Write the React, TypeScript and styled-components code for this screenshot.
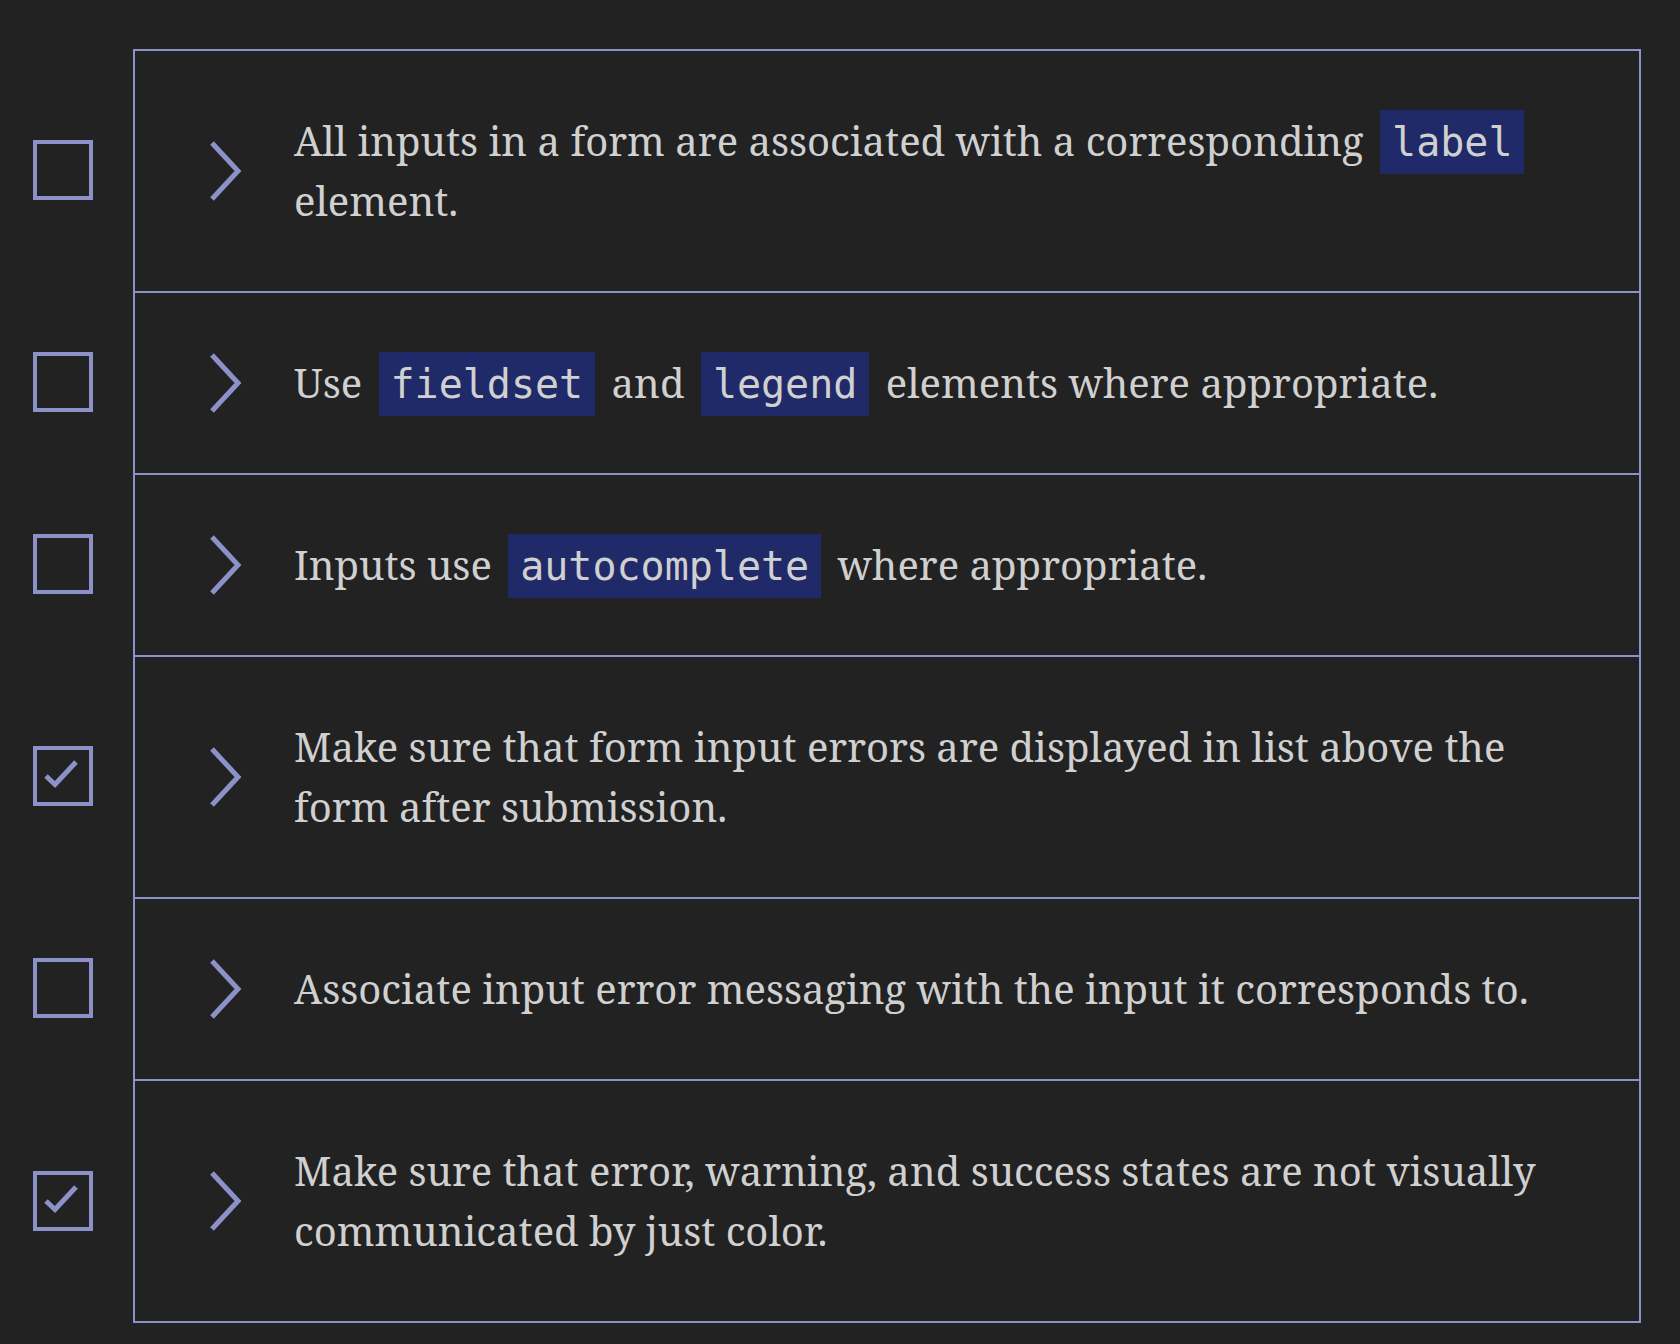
import React from "react";
import styled, { createGlobalStyle } from "styled-components";

const GlobalStyle = createGlobalStyle`
  html, body {
    margin: 0;
    padding: 0;
    background: #222222;
  }
  body {
    font-family: "Noto Serif", "DejaVu Serif", serif;
  }
`;

const Page = styled.main`
  min-height: 1344px;
  box-sizing: border-box;
  padding: 49px 39px 21px 33px;
  background: #222222;
`;

const List = styled.ul`
  list-style: none;
  margin: 0;
  padding: 0;
`;

const Item = styled.li`
  display: grid;
  grid-template-columns: 100px 1fr;
  align-items: center;
`;

const Box = styled.span`
  box-sizing: border-box;
  width: 60px;
  height: 60px;
  border: 4px solid #8c92c9;
  display: flex;
  align-items: center;
  justify-content: center;
  cursor: pointer;
`;

const Card = styled.div<{ $last: boolean }>`
  display: flex;
  align-items: center;
  padding: 60px 60px 60px 70px;
  border-left: 2px solid #8c92c9;
  border-right: 2px solid #8c92c9;
  border-top: 2px solid #8c92c9;
  border-bottom: ${(p) => (p.$last ? "2px solid #8c92c9" : "none")};
`;

const Toggle = styled.button`
  flex: none;
  width: 40px;
  height: 60px;
  padding: 0;
  margin: 0 49px 0 0;
  border: none;
  background: none;
  display: block;
  cursor: pointer;
  svg {
    display: block;
  }
`;

const Text = styled.p`
  margin: 0;
  flex: 1;
  font-family: "Noto Serif", "DejaVu Serif", serif;
  font-size: 40px;
  line-height: 60px;
  color: #d0d0d0;
`;

const Code = styled.code`
  font-family: "DejaVu Sans Mono", "Liberation Mono", monospace;
  font-size: 40px;
  line-height: 1;
  background: #212a68;
  color: #d0d0d0;
  padding: 9px 12px;
  margin: 0 6px;
`;

type Part = string | { code: string };

const items: { checked: boolean; parts: Part[] }[] = [
  {
    checked: false,
    parts: [
      "All inputs in a form are associated with a corresponding ",
      { code: "label" },
      " element.",
    ],
  },
  {
    checked: false,
    parts: ["Use ", { code: "fieldset" }, " and ", { code: "legend" }, " elements where appropriate."],
  },
  {
    checked: false,
    parts: ["Inputs use ", { code: "autocomplete" }, " where appropriate."],
  },
  {
    checked: true,
    parts: ["Make sure that form input errors are displayed in list above the form after submission."],
  },
  {
    checked: false,
    parts: ["Associate input error messaging with the input it corresponds to."],
  },
  {
    checked: true,
    parts: ["Make sure that error, warning, and success states are not visually communicated by just color."],
  },
];

const Check = () => (
  <svg width="52" height="52" viewBox="0 0 52 52" aria-hidden="true">
    <path d="M9 26 L18 34.5 L39 12" fill="none" stroke="#8c92c9" strokeWidth="5" />
  </svg>
);

const Chevron = () => (
  <svg width="40" height="60" viewBox="0 0 40 60" aria-hidden="true">
    <path d="M7 2 L33 30 L7 58" fill="none" stroke="#8c92c9" strokeWidth="5" />
  </svg>
);

export default function App() {
  return (
    <>
      <GlobalStyle />
      <Page>
        <List>
          {items.map((it, i) => (
            <Item key={i}>
              <Box role="checkbox" aria-checked={it.checked}>
                {it.checked && <Check />}
              </Box>
              <Card $last={i === items.length - 1}>
                <Toggle aria-label="Expand">
                  <Chevron />
                </Toggle>
                <Text>
                  {it.parts.map((p, j) =>
                    typeof p === "string" ? <React.Fragment key={j}>{p}</React.Fragment> : <Code key={j}>{p.code}</Code>
                  )}
                </Text>
              </Card>
            </Item>
          ))}
        </List>
      </Page>
    </>
  );
}
